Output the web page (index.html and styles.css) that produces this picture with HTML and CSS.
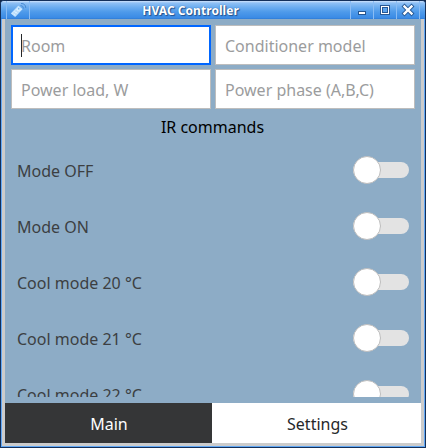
FILE: index.html
```html
<!DOCTYPE html>
<html lang="en">
<head>
<meta charset="utf-8">
<title>HVAC Controller</title>
<link rel="stylesheet" href="styles.css">
</head>
<body>
<div class="window">
  <header class="titlebar">
    <span class="menu-button">
      <svg width="22" height="18" viewBox="0 0 22 18">
        <path d="M4.6 12.4 11.4 5.4 14.8 8.2 8.2 15.2Z" fill="#d8eeff" stroke="#c4e4ff" stroke-width="1.2" stroke-linejoin="round"/>
        <path d="M11 7h1.4v1.4H11zM8.6 9.4h1v1h-1zM10.4 10.4h1v1h-1zM6.6 11.6h1v1h-1zM8.4 12.6h1v1h-1z" fill="#7db8f0"/>
        <path d="M13.5 4.5q2.8 0 3 3M14 2.5q4.6-.2 4.8 4.5" fill="none" stroke="#498bd4" stroke-width="1"/>
      </svg>
    </span>
    <h1 class="title">HVAC Controller</h1>
    <span class="controls">
      <span class="control"><svg width="22" height="18" viewBox="0 0 22 18"><rect x="7" y="10" width="8" height="4" fill="#24548f"/><rect x="8" y="11" width="6" height="2" fill="#fff"/></svg></span>
      <span class="control"><svg width="22" height="18" viewBox="0 0 22 18"><path d="M6 4h10v10H6z" fill="#285894"/><path d="M7 5h8v8H7z" fill="#fff"/><path d="M8 6h6v6H8z" fill="#285894"/><path d="M9 7h4v4H9z" fill="#5ca4ee"/></svg></span>
      <span class="control"><svg width="22" height="18" viewBox="0 0 22 18"><path d="m7.5 5.5 7 7m0-7-7 7" stroke="#285894" stroke-width="4.2" stroke-linecap="square"/><path d="m7.5 5.5 7 7m0-7-7 7" stroke="#fff" stroke-width="2.4" stroke-linecap="square"/></svg></span>
    </span>
  </header>
  <main class="content">
    <div class="fields">
      <div class="field focused"><span class="caret"></span>Room</div>
      <div class="field">Conditioner model</div>
      <div class="field">Power load, W</div>
      <div class="field">Power phase (A,B,C)</div>
    </div>
    <h2 class="heading">IR commands</h2>
    <div class="commands">
      <div class="row"><span class="label">Mode OFF</span><span class="switch"><i class="knob"></i></span></div>
      <div class="row"><span class="label">Mode ON</span><span class="switch"><i class="knob"></i></span></div>
      <div class="row"><span class="label">Cool mode 20 °C</span><span class="switch"><i class="knob"></i></span></div>
      <div class="row"><span class="label">Cool mode 21 °C</span><span class="switch"><i class="knob"></i></span></div>
      <div class="row"><span class="label">Cool mode 22 °C</span><span class="switch"><i class="knob"></i></span></div>
    </div>
    <nav class="tabs">
      <div class="tab active">Main</div>
      <div class="tab">Settings</div>
    </nav>
  </main>
</div>
</body>
</html>
```
FILE: styles.css
```css
* { box-sizing: border-box; }
body {
  margin: 0;
  overflow: hidden;
  background: #14284b;
  font-family: "Noto Sans", sans-serif;
  font-size: 16px;
  line-height: 22px;
}
.window {
  width: 426px;
  height: 448px;
  border: 1px solid #14305a;
  border-radius: 4px 4px 0 0;
  background: #62a8f5;
  overflow: hidden;
}
.titlebar {
  height: 18px;
  display: grid;
  grid-template-columns: 30px 1fr 75px;
  background: linear-gradient(#cfe3fb 0, #8fc0f5 2px, #6eaef0 6px, #4e9aea 11px, #3a8ae5 17px, #2b78d2 18px);
}
.menu-button {
  width: 24px;
  margin-left: 5px;
  border-left: 1px solid #8abcf4;
  border-right: 1px solid #8abcf4;
}
.menu-button svg, .control svg { display: block; }
.title {
  margin: 0;
  padding-top: 1px;
  font-size: 12px;
  line-height: 17px;
  font-weight: 700;
  letter-spacing: 0.05px;
  text-align: center;
  white-space: nowrap;
  color: #fff;
  text-shadow: 1px 1px 1px #23518c, 0 0 1px #23518c;
}
.controls {
  display: flex;
  justify-content: flex-end;
  padding-right: 5px;
}
.control {
  width: 23px;
  flex: none;
  border-left: 1px solid #8abcf4;
}
.control:last-child {
  width: 24px;
  border-right: 1px solid #8abcf4;
}
.content {
  height: 427px;
  margin: 0 1px 1px;
  border: solid #cccccc;
  border-width: 0 3px 3px;
  background: #8dacc6;
  display: flex;
  flex-direction: column;
}
.fields {
  display: grid;
  grid-template-columns: 200px 200px;
  grid-auto-rows: 40px;
  gap: 4px;
  padding: 6px 6px 0;
}
.field {
  display: flex;
  align-items: center;
  position: relative;
  padding: 2px 9px 0;
  border: 1px solid #bdbdbd;
  background: #fff;
  color: #9b9c9d;
}
.field.focused {
  border: 2px solid #0066ff;
  padding-left: 8px;
}
.caret {
  position: absolute;
  left: 8px;
  top: 7px;
  width: 1px;
  height: 23px;
  background: #26282a;
}
.heading {
  margin: 7px 0 4px;
  padding-right: 1px;
  font-size: 16px;
  line-height: 22px;
  font-weight: 400;
  text-align: center;
  color: #000;
}
.commands {
  height: 255px;
  margin-bottom: 6px;
  padding: 0 12px;
  overflow: hidden;
}
.row {
  height: 56px;
  display: flex;
  align-items: center;
  justify-content: space-between;
}
.label {
  padding-top: 2px;
  color: #3c3f42;
}
.switch {
  width: 56px;
  height: 28px;
  display: flex;
  position: relative;
}
.switch::before {
  content: "";
  width: 56px;
  height: 16px;
  margin-top: 6px;
  border-radius: 8px;
  background: #e3e3e3;
}
.knob {
  position: absolute;
  left: 0;
  top: 0;
  width: 28px;
  height: 28px;
  border: 1px solid #bdbdbd;
  border-radius: 50%;
  background: #fff;
}
.tabs {
  height: 40px;
  display: grid;
  grid-template-columns: 207px 1fr;
}
.tab {
  display: flex;
  align-items: center;
  justify-content: center;
  padding: 2px 0 0 2px;
  background: #fff;
  color: #26282a;
}
.tab.active {
  padding-left: 1px;
  background: #353637;
  color: #fff;
}
```
